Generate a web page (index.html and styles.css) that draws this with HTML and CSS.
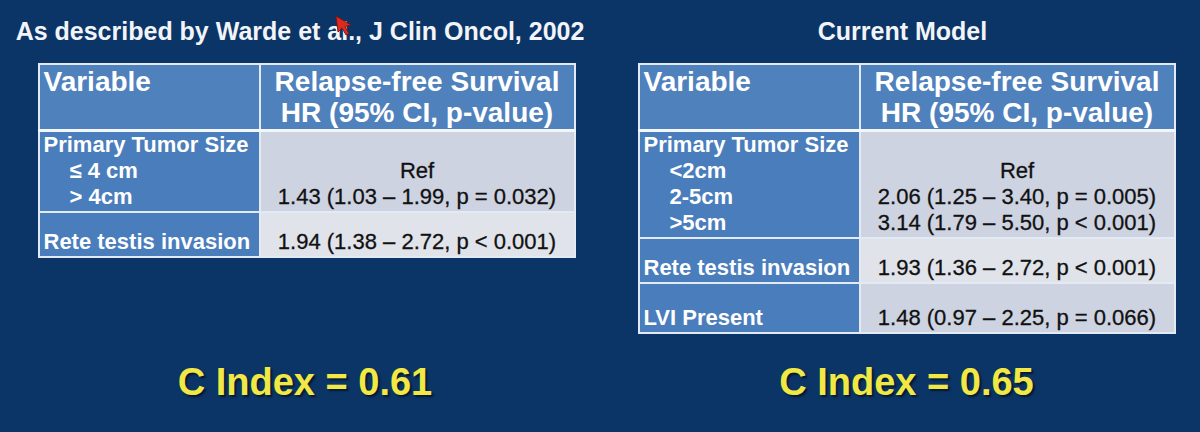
FILE: index.html
```html
<!DOCTYPE html>
<html lang="en">
<head>
<meta charset="utf-8">
<title>C Index comparison</title>
<link rel="stylesheet" href="styles.css">
</head>
<body>
<div class="slide">
  <h2 class="title title-left">As described by Warde et al., J Clin Oncol, 2002</h2>
  <h2 class="title title-right">Current Model</h2>

  <table class="hr-table">
    <tr>
      <th class="var">Variable</th>
      <th class="val">Relapse-free Survival<br>HR (95% CI, p-value)</th>
    </tr>
    <tr class="row-dark">
      <td class="lab">Primary Tumor Size<br><span class="ind">≤ 4 cm</span><br><span class="ind">&gt; 4cm</span></td>
      <td class="num">Ref<br>1.43 (1.03 – 1.99, p = 0.032)</td>
    </tr>
    <tr class="row-light h47">
      <td class="lab">Rete testis invasion</td>
      <td class="num">1.94 (1.38 – 2.72, p &lt; 0.001)</td>
    </tr>
  </table>

  <table class="hr-table">
    <tr>
      <th class="var">Variable</th>
      <th class="val">Relapse-free Survival<br>HR (95% CI, p-value)</th>
    </tr>
    <tr class="row-dark">
      <td class="lab">Primary Tumor Size<br><span class="ind">&lt;2cm</span><br><span class="ind">2-5cm</span><br><span class="ind">&gt;5cm</span></td>
      <td class="num">Ref<br>2.06 (1.25 – 3.40, p = 0.005)<br>3.14 (1.79 – 5.50, p &lt; 0.001)</td>
    </tr>
    <tr class="row-light h46">
      <td class="lab">Rete testis invasion</td>
      <td class="num">1.93 (1.36 – 2.72, p &lt; 0.001)</td>
    </tr>
    <tr class="row-dark h50">
      <td class="lab">LVI Present</td>
      <td class="num">1.48 (0.97 – 2.25, p = 0.066)</td>
    </tr>
  </table>

  <p class="cindex">C Index = 0.61</p>
  <p class="cindex">C Index = 0.65</p>

  <svg class="cursor" width="20" height="22" viewBox="0 0 20 22" aria-hidden="true">
    <polygon points="1,1 3,17 7,13 11,20 14,18.5 10,11.6 16,10" fill="#dc2a1f" stroke="#7d120d" stroke-width="0.9" stroke-linejoin="round"/>
  </svg>
</div>
</body>
</html>
```

FILE: styles.css
```css
html, body {
  margin: 0;
  padding: 0;
  background: #0b3567;
}

.slide {
  position: relative;
  width: 1200px;
  height: 432px;
  background: #0b3567;
  display: grid;
  grid-template-columns: 613px 587px;
  grid-template-rows: 63px 270px 99px;
  font-family: "Liberation Sans", Arial, sans-serif;
  overflow: hidden;
}

.title {
  margin: 0;
  padding-top: 16px;
  font-size: 25px;
  line-height: 30px;
  font-weight: 700;
  color: #f2f4f8;
  text-align: center;
  white-space: nowrap;
}

.title-left {
  padding-right: 13px;
}

.title-right {
  padding-right: 8px;
}

.hr-table {
  align-self: start;
  justify-self: center;
  width: 538px;
  border-collapse: collapse;
  border: 2px solid #b9c9e4;
}

.hr-table th,
.hr-table td {
  border: 2px solid #e4eaf4;
  padding: 0 4px 1px;
}

.hr-table th {
  background: #4f81bd;
  color: #fff;
  font-size: 28px;
  line-height: 31px;
  font-weight: 700;
  vertical-align: top;
  padding-top: 1px;
  padding-bottom: 1px;
  border-bottom: 3px solid #f3f6fb;
}

.hr-table th.var {
  width: 211px;
  text-align: left;
}

.hr-table th.val {
  text-align: center;
}

.hr-table td {
  font-size: 22px;
  line-height: 26px;
  vertical-align: bottom;
}

.hr-table td.lab {
  background: #4a7dbc;
  color: #fff;
  font-weight: 700;
  white-space: nowrap;
}

.hr-table td.num {
  color: #111;
  text-align: center;
  white-space: nowrap;
  -webkit-text-stroke: 0.3px #111;
}

.row-dark td.num {
  background: #cdd3e1;
}

.row-light td.num {
  background: #e0e3ea;
}

.ind {
  padding-left: 26px;
}

.h47 td { height: 42px; }
.h46 td { height: 42px; }
.h50 td { height: 47px; }

.cindex {
  margin: 0;
  padding-top: 27px;
  font-size: 38px;
  line-height: 44px;
  font-weight: 700;
  color: #f1e845;
  text-align: center;
  text-shadow: 2px 2px 2px rgba(0, 0, 0, 0.55);
}

.cindex:first-of-type {
  padding-right: 3px;
}

.cursor {
  position: absolute;
  left: 335px;
  top: 15px;
}
```
